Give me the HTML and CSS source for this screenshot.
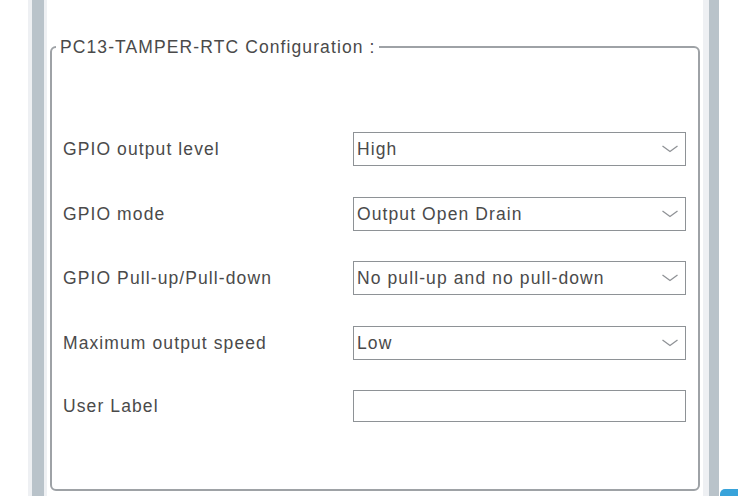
FILE: index.html
```html
<!DOCTYPE html>
<html>
<head>
<meta charset="utf-8">
<link rel="stylesheet" href="styles.css">
</head>
<body>
<div class="page">
  <div class="gutter-left"></div>
  <div class="rail-light rl-a"></div>
  <div class="rail rail-a"></div>
  <div class="rail-light rl-b"></div>
  <main class="main">
    <fieldset class="config">
      <legend class="config-title">PC13-TAMPER-RTC Configuration :</legend>
      <div class="form">
        <div class="label">GPIO output level</div>
        <div class="select"><span class="value">High</span><svg class="chev" width="16" height="8" viewBox="0 0 16 8"><polyline points="0.5,1 8,6.5 15.5,1" fill="none" stroke="#8f9296" stroke-width="1.3"/></svg></div>
        <div class="label">GPIO mode</div>
        <div class="select"><span class="value">Output Open Drain</span><svg class="chev" width="16" height="8" viewBox="0 0 16 8"><polyline points="0.5,1 8,6.5 15.5,1" fill="none" stroke="#8f9296" stroke-width="1.3"/></svg></div>
        <div class="label">GPIO Pull-up/Pull-down</div>
        <div class="select"><span class="value">No pull-up and no pull-down</span><svg class="chev" width="16" height="8" viewBox="0 0 16 8"><polyline points="0.5,1 8,6.5 15.5,1" fill="none" stroke="#8f9296" stroke-width="1.3"/></svg></div>
        <div class="label">Maximum output speed</div>
        <div class="select"><span class="value">Low</span><svg class="chev" width="16" height="8" viewBox="0 0 16 8"><polyline points="0.5,1 8,6.5 15.5,1" fill="none" stroke="#8f9296" stroke-width="1.3"/></svg></div>
        <div class="label">User Label</div>
        <div class="input"></div>
      </div>
    </fieldset>
  </main>
  <div class="rail-light rl-c"></div>
  <div class="rail rail-b"></div>
  <div class="gutter-right"></div>
  <div class="corner-badge"></div>
</div>
</body>
</html>
```

FILE: styles.css
```css
html, body {
  margin: 0;
  padding: 0;
  background: #ffffff;
}

.page {
  position: relative;
  display: flex;
  width: 738px;
  height: 496px;
  overflow: hidden;
  font-family: "Liberation Sans", Arial, sans-serif;
  font-size: 17.5px;
  letter-spacing: 1.1px;
  color: #4a4a4a;
}

.gutter-left { width: 28px; flex: none; }
.rail-light { background: #eef0f3; flex: none; }
.rl-a { width: 4px; }
.rl-b { width: 3px; }
.rl-c { width: 6px; }
.rail { background: #b9c3ca; flex: none; }
.rail-a { width: 12px; }
.rail-b { width: 10px; }
.gutter-right { width: 19px; flex: none; }

.main {
  flex: 1;
  padding: 37px 3px 0 3px;
  box-sizing: border-box;
}

.config {
  margin: 0;
  padding: 0;
  min-width: 0;
  height: 454px;
  box-sizing: border-box;
  border: 2px solid #9ea2a6;
  border-radius: 6px;
}

.config-title {
  margin-left: 4px;
  padding: 0 4px;
  line-height: 20px;
  height: 20px;
}

.form {
  display: grid;
  grid-template-columns: 290px 333px;
  grid-template-rows: 34px 34px 34px 34px 32px;
  row-gap: 30.5px;
  margin-top: 75px;
  padding-left: 11px;
  align-items: center;
}

.label {
  line-height: 20px;
}

.select {
  height: 34px;
  box-sizing: border-box;
  border: 1px solid #8e9296;
  display: flex;
  align-items: center;
  justify-content: space-between;
  padding: 0 7px 0 3px;
}

.value {
  line-height: 20px;
}

.chev {
  display: block;
}

.input {
  height: 32px;
  box-sizing: border-box;
  border: 1px solid #8e9296;
}

.corner-badge {
  position: absolute;
  left: 720px;
  top: 489px;
  width: 30px;
  height: 20px;
  background: #38a3da;
  border-top-left-radius: 5px;
}
```
